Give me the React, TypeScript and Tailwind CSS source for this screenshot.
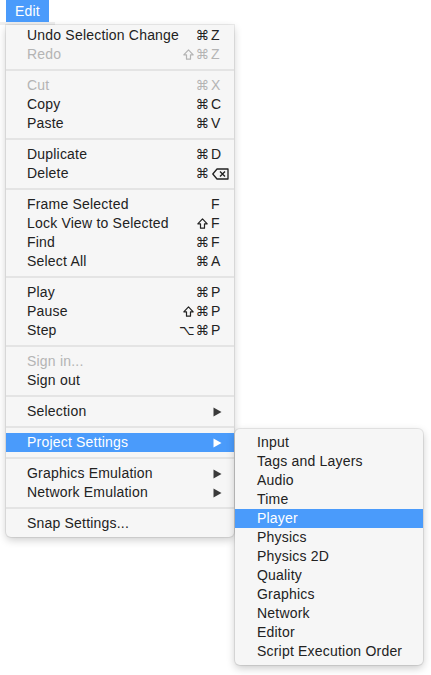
import React from "react";

type Item =
  | { type: "sep" }
  | { type: "item"; label: string; mods?: string; key?: string; disabled?: boolean; arrow?: boolean; active?: boolean; del?: boolean };

const items: Item[] = [
  { type: "item", label: "Undo Selection Change", mods: "⌘", key: "Z" },
  { type: "item", label: "Redo", mods: "⇧⌘", key: "Z", disabled: true },
  { type: "sep" },
  { type: "item", label: "Cut", mods: "⌘", key: "X", disabled: true },
  { type: "item", label: "Copy", mods: "⌘", key: "C" },
  { type: "item", label: "Paste", mods: "⌘", key: "V" },
  { type: "sep" },
  { type: "item", label: "Duplicate", mods: "⌘", key: "D" },
  { type: "item", label: "Delete", mods: "⌘", del: true },
  { type: "sep" },
  { type: "item", label: "Frame Selected", key: "F" },
  { type: "item", label: "Lock View to Selected", mods: "⇧", key: "F" },
  { type: "item", label: "Find", mods: "⌘", key: "F" },
  { type: "item", label: "Select All", mods: "⌘", key: "A" },
  { type: "sep" },
  { type: "item", label: "Play", mods: "⌘", key: "P" },
  { type: "item", label: "Pause", mods: "⇧⌘", key: "P" },
  { type: "item", label: "Step", mods: "⌥⌘", key: "P" },
  { type: "sep" },
  { type: "item", label: "Sign in...", disabled: true },
  { type: "item", label: "Sign out" },
  { type: "sep" },
  { type: "item", label: "Selection", arrow: true },
  { type: "sep" },
  { type: "item", label: "Project Settings", arrow: true, active: true },
  { type: "sep" },
  { type: "item", label: "Graphics Emulation", arrow: true },
  { type: "item", label: "Network Emulation", arrow: true },
  { type: "sep" },
  { type: "item", label: "Snap Settings..." },
];

const sub = [
  "Input",
  "Tags and Layers",
  "Audio",
  "Time",
  "Player",
  "Physics",
  "Physics 2D",
  "Quality",
  "Graphics",
  "Network",
  "Editor",
  "Script Execution Order",
];

const Arrow = ({ white }: { white?: boolean }) => (
  <svg width="9" height="10" viewBox="0 0 9 10" className="shrink-0">
    <path d="M0.5 0.5 L8.5 5 L0.5 9.5 Z" fill={white ? "#ffffff" : "#3a3a3a"} />
  </svg>
);

const DelKey = ({ color }: { color: string }) => (
  <svg width="17" height="12" viewBox="0 0 17 12">
    <path d="M5 1 H16 V11 H5 L0.8 6 Z" fill="none" stroke={color} strokeWidth="1.3" strokeLinejoin="round" />
    <path d="M8 3.5 L13 8.5 M13 3.5 L8 8.5" stroke={color} strokeWidth="1.4" />
  </svg>
);

const ShiftKey = ({ color }: { color: string }) => (
  <svg width="11" height="11" viewBox="0 0 11 11" className="mr-[2px]">
    <path d="M5.5 0.9 L10.2 5.8 H7.5 V10.2 H3.5 V5.8 H0.8 Z" fill="none" stroke={color} strokeWidth="1.2" strokeLinejoin="round" />
  </svg>
);

function SubMenu() {
  return (
    <div className="absolute left-[229px] top-[-4px] w-[188px] rounded-[5px] bg-[#f6f6f6] py-[4px] shadow-[0_0_0_1px_rgba(0,0,0,0.08),0_3px_8px_rgba(0,0,0,0.22)] z-10">
      {sub.map((s) => (
        <div
          key={s}
          className={
            "h-[19px] flex items-center pl-[22px] " +
            (s === "Player" ? "bg-[#4a9bfb] text-white" : "text-[#222222]")
          }
        >
          {s}
        </div>
      ))}
    </div>
  );
}

export default function App() {
  return (
    <div
      className="w-[431px] h-[675px] bg-white text-[14px] leading-[19px] tracking-[0.2px] relative"
      style={{ fontFamily: '"Liberation Sans", Arial, sans-serif' }}
    >
      <div className="h-[22px] flex">
        <div className="ml-[6px] w-[43px] bg-[#4a9bfb] text-white flex items-center pl-[9px]">Edit</div>
      </div>
      <div className="h-[3px] w-[55px] bg-[#efefef]" />
      <div className="ml-[6px] w-[228px] bg-[#f6f6f6] rounded-b-[5px] pt-[1px] pb-[4px] shadow-[0_0_0_1px_rgba(0,0,0,0.07),0_3px_8px_rgba(0,0,0,0.2)]">
        {items.map((it, i) => {
          if (it.type === "sep")
            return (
              <div key={i} className="h-[12px] flex items-center">
                <div className="h-[2px] w-full bg-[#e4e4e4]" />
              </div>
            );
          const color = it.active ? "text-white" : it.disabled ? "text-[#b4b4b4]" : "text-[#222222]";
          const iconColor = it.disabled ? "#b4b4b4" : "#222222";
          const mods = it.mods ?? "";
          const hasShift = mods.includes("⇧");
          const rest = mods.replace("⇧", "");
          return (
            <div
              key={i}
              className={"relative h-[19px] flex items-center pl-[21px] pr-[12px] " + color + (it.active ? " bg-[#4a9bfb]" : "")}
            >
              <span className="flex-1 whitespace-nowrap">{it.label}</span>
              {it.arrow ? (
                <Arrow white={it.active} />
              ) : it.mods || it.key || it.del ? (
                <span className="flex items-center">
                  {hasShift && <ShiftKey color={iconColor} />}
                  <span
                    className="text-right whitespace-nowrap mr-[1px]"
                    style={{ fontFamily: '"DejaVu Sans", sans-serif', fontSize: "13.5px", letterSpacing: "1px" }}
                  >
                    {rest}
                  </span>
                  <span className="w-[11px] flex items-center">
                    {it.del ? (
                      <span className="ml-[1px] -mr-[7px]">
                        <DelKey color={iconColor} />
                      </span>
                    ) : (
                      it.key
                    )}
                  </span>
                </span>
              ) : null}
              {it.active && <SubMenu />}
            </div>
          );
        })}
      </div>
    </div>
  );
}
